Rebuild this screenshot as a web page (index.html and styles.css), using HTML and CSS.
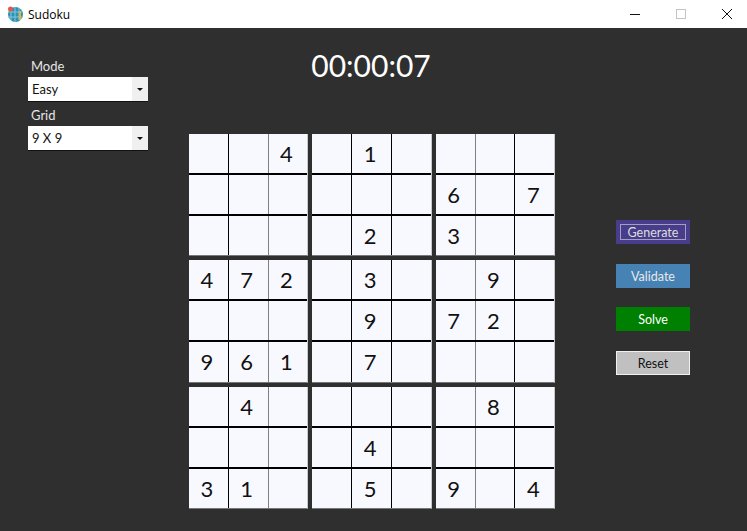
FILE: index.html
```html
<!DOCTYPE html>
<html lang="en">
<head>
    <meta charset="UTF-8">
    <title>Sudoku</title>
    <link rel="stylesheet" href="styles.css">
</head>
<body>
    <div class="titlebar">
        <svg class="app-icon" width="16" height="16" viewBox="0 0 16 16">
            <circle cx="8.5" cy="8.5" r="7.5" fill="#2a93b8"/>
            <path d="M4 4v10M8 1v15M12 2v12M1 6h15M1 11h15" stroke="#86c6d8" stroke-width="1" fill="none"/>
            <rect x="12" y="5" width="2" height="9" fill="#e8b23a"/>
            <circle cx="3.5" cy="3" r="2.5" fill="#e2574c"/>
        </svg>
        <span class="app-title">Sudoku</span>
        <div class="window-buttons">
            <svg width="10" height="10" viewBox="0 0 10 10"><path d="M0 5.5h11" stroke="#111" fill="none"/></svg>
            <svg width="10" height="10" viewBox="0 0 10 10"><rect x="0.5" y="0.5" width="9" height="9" stroke="#c4c4c4" fill="none"/></svg>
            <svg width="10" height="10" viewBox="0 0 10 10"><path d="M0 0l10 10M10 0L0 10" stroke="#111" fill="none"/></svg>
        </div>
    </div>

    <div class="main">
        <div class="sidebar">
            <label class="field-label">Mode</label>
            <div class="combo"><span class="combo-text">Easy</span><span class="combo-arrow"></span></div>
            <label class="field-label">Grid</label>
            <div class="combo"><span class="combo-text">9 X 9</span><span class="combo-arrow"></span></div>
        </div>

        <div class="center">
            <div class="timer">00:00:07</div>
            <div class="board" id="board"></div>
        </div>

        <div class="actions">
            <button class="btn btn-generate"><span>Generate</span></button>
            <button class="btn btn-validate">Validate</button>
            <button class="btn btn-solve">Solve</button>
            <button class="btn btn-reset">Reset</button>
        </div>
    </div>

    <script>
        // puzzle rows, 0 is an empty cell
        const rows = [
            '004010000',
            '000000607',
            '000020300',
            '472030090',
            '000090720',
            '961070000',
            '040000080',
            '000040000',
            '310050904'
        ];
        const board = document.getElementById('board');
        for (let b = 0; b < 9; b++) {
            const box = document.createElement('div');
            box.className = 'box';
            for (let i = 0; i < 9; i++) {
                const r = Math.floor(b / 3) * 3 + Math.floor(i / 3);
                const c = (b % 3) * 3 + (i % 3);
                const cell = document.createElement('div');
                cell.className = 'cell';
                if (rows[r][c] !== '0') cell.textContent = rows[r][c];
                box.appendChild(cell);
            }
            board.appendChild(box);
        }
    </script>
</body>
</html>
```

FILE: styles.css
```css
html, body {
    margin: 0;
    padding: 0;
    height: 100%;
}

body {
    background-color: #2f2f2f;
    font-family: Lato, sans-serif;
    overflow: hidden;
}

.titlebar {
    display: flex;
    align-items: center;
    height: 28px;
    background-color: #fff;
    color: #000;
}

.app-icon {
    margin-left: 7px;
}

.app-title {
    margin-left: 5px;
    font-family: "Open Sans", sans-serif;
    font-size: 12px;
}

.window-buttons {
    display: flex;
    gap: 36px;
    margin-left: auto;
    margin-right: 15px;
}

.main {
    display: flex;
}

.sidebar {
    width: 120px;
    margin-left: 28px;
    padding-top: 28px;
}

.field-label {
    display: block;
    height: 21px;
    padding-left: 3px;
    color: #e6e6e6;
    font-size: 13px;
    line-height: 20px;
}

.combo {
    display: flex;
    height: 24px;
    margin-bottom: 4px;
    background-color: #fff;
    box-shadow: 0 1px 0 #111;
}

.combo-text {
    flex: 1;
    padding-left: 4px;
    color: #111;
    font-size: 13px;
    line-height: 25px;
}

.combo-arrow {
    position: relative;
    width: 16px;
    background-color: #f0f0f0;
}

.combo-arrow::after {
    content: "";
    position: absolute;
    left: 5px;
    top: 11px;
    border-left: 3px solid transparent;
    border-right: 3px solid transparent;
    border-top: 3px solid #111;
}

.center {
    margin-left: 41px;
    width: 366px;
}

.timer {
    height: 106px;
    padding-top: 19px;
    padding-right: 2px;
    box-sizing: border-box;
    color: #fff;
    font-size: 30px;
    line-height: 36px;
    text-align: center;
}

.board {
    display: grid;
    grid-template-columns: repeat(3, 119.4px);
    grid-auto-rows: 122.3px;
    gap: 4px;
}

.box {
    display: grid;
    grid-template-columns: repeat(3, 1fr);
    grid-template-rows: repeat(3, 1fr);
    column-gap: 1px;
    row-gap: 2px;
    background-color: #000;
    border-right: 1px solid #c8c8c8;
    border-bottom: 1px solid #777;
}

.cell {
    padding-right: 3px;
    background-color: #f8f9ff;
    color: #111;
    font-size: 22px;
    line-height: 39px;
    text-align: center;
}

.box:nth-child(3n+1) .cell:nth-child(3n) {
    box-shadow: -1px 0 0 #808080;
}

.box:nth-child(3n) .cell:nth-child(3n+2) {
    box-shadow: -1px 0 0 #808080;
}

.actions {
    display: flex;
    flex-direction: column;
    gap: 19.7px;
    margin-left: 61px;
    padding-top: 192px;
}

.btn {
    width: 74px;
    height: 24px;
    padding: 1px 0 0;
    border: none;
    font-family: Lato, sans-serif;
    font-size: 12.5px;
    color: #fff;
}

.btn-generate {
    padding: 4px;
    background-color: #483d8b;
    color: #ddd;
}

.btn-generate span {
    display: block;
    height: 14px;
    border: 1px solid #a49ec5;
    line-height: 15px;
}

.btn-validate {
    background-color: #4682b4;
    color: #e8e8e8;
}

.btn-solve {
    background-color: #008000;
}

.btn-reset {
    background-color: #c0c0c0;
    border: 1px solid #f0f0f0;
    color: #111;
}
```
